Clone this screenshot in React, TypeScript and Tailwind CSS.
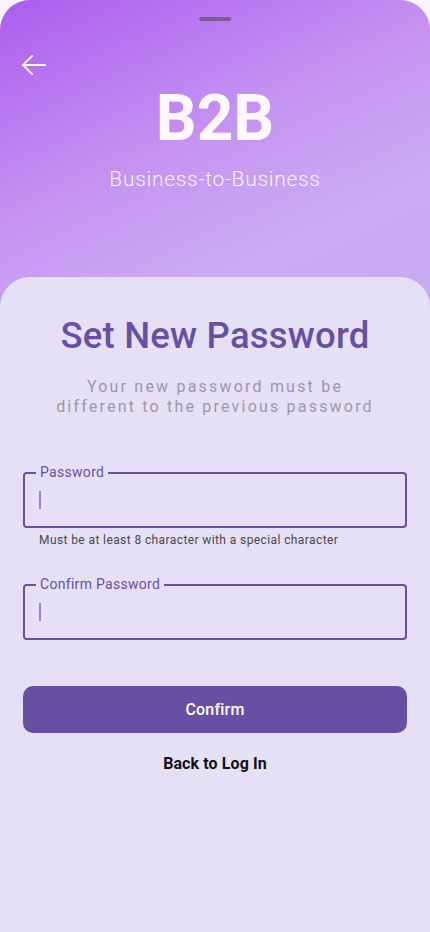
import React from "react";

export default function App() {
  return (
    <div className="w-[430px] h-[932px] bg-[#f7f5fa] overflow-hidden" style={{ fontFamily: "Roboto, 'Noto Sans', sans-serif" }}>
      <div className="relative w-full h-full rounded-t-[30px] overflow-hidden bg-[#e7e1f6] flex flex-col">
        <div className="h-[307px] shrink-0 bg-[linear-gradient(155deg,#ac5cef_0%,#c593f2_45%,#cbacf3_75%,#c8a8f2_100%)] flex flex-col items-center">
          <div className="mt-[17px] w-[32px] h-[4px] rounded-full bg-[#7b5c9d]" />
          <div className="w-full px-[21px] mt-[34px] h-[20px]">
            <svg width="26" height="20" viewBox="0 0 26 20" fill="none" stroke="white" strokeWidth="1.8" strokeLinecap="square">
              <path d="M2 10H24" />
              <path d="M11 1L2 10L11 19" />
            </svg>
          </div>
          <div className="mt-[6px] text-[64px] leading-[76px] font-bold text-[#fff8ff]">B2B</div>
          <div className="mt-[10px] text-[21px] leading-[25px] font-light text-[#f8f0ff] tracking-[0.7px]">Business-to-Business</div>
        </div>
        <div className="-mt-[30px] flex-1 rounded-t-[30px] bg-[#e6e0f6] flex flex-col items-center px-[23px]">
          <h1 className="mt-[37px] text-[36.5px] leading-[44px] font-medium text-[#6750a4] tracking-[0.2px]">Set New Password</h1>
          <p className="mt-[19px] text-center text-[16px] leading-[20px] text-[#9d95a8] tracking-[2.2px]">
            Your new password must be<br />different to the previous password
          </p>
          <div className="mt-[55px] w-full">
            <div className="relative h-[56px] w-full rounded-[4px] border-2 border-[#6750a4]">
              <span className="absolute left-[11px] -top-[10px] px-[4px] bg-[#e6e0f6] text-[14px] leading-[16px] text-[#6750a4] tracking-[0.3px]">Password</span>
              <div className="absolute left-[14px] top-[17px] w-[1.5px] h-[18px] bg-[#9a86c4]" />
            </div>
            <div className="mt-[4px] pl-[16px] text-[12px] leading-[16px] text-[#49454f] tracking-[0.4px]">Must be at least 8 character with a special character</div>
          </div>
          <div className="mt-[36px] w-full">
            <div className="relative h-[56px] w-full rounded-[4px] border-2 border-[#6750a4]">
              <span className="absolute left-[11px] -top-[10px] px-[4px] bg-[#e6e0f6] text-[14px] leading-[16px] text-[#6750a4] tracking-[0.3px]">Confirm Password</span>
              <div className="absolute left-[14px] top-[17px] w-[1.5px] h-[18px] bg-[#9a86c4]" />
            </div>
          </div>
          <button className="mt-[46px] w-full h-[47px] rounded-[10px] bg-[#6750a4] text-white text-[16px] font-medium tracking-[0.2px]">Confirm</button>
          <div className="mt-[21px] text-[16px] leading-[20px] font-bold text-[#111] tracking-[0.1px]">Back to Log In</div>
        </div>
      </div>
    </div>
  );
}
